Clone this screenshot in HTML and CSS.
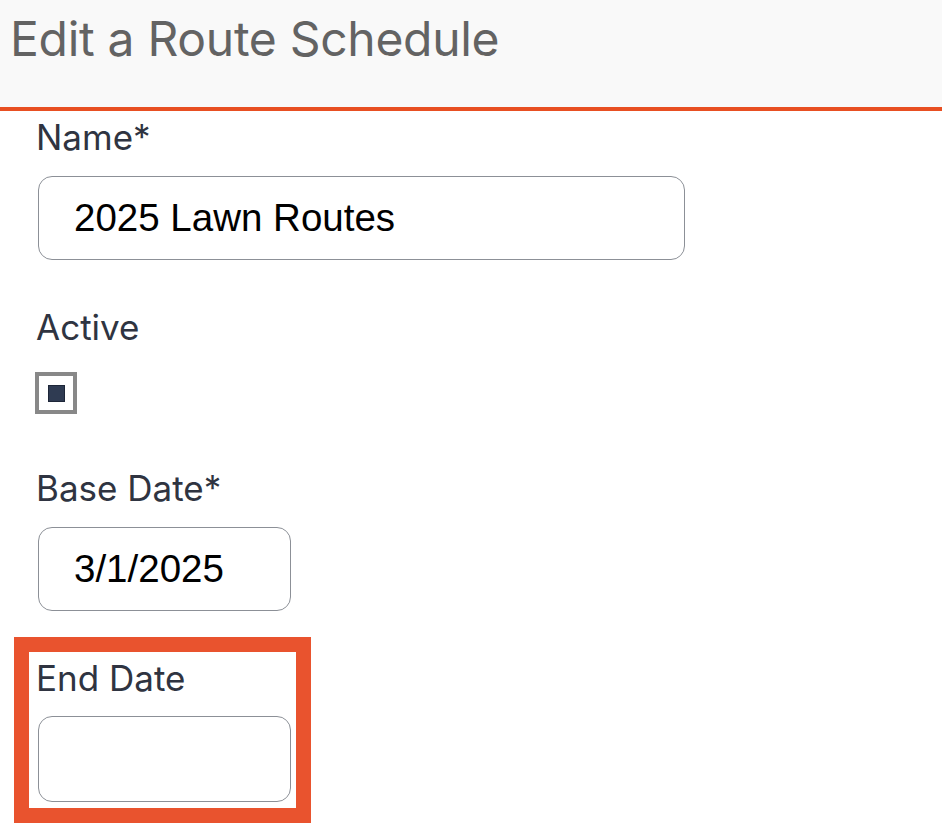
FILE: index.html
```html
<!DOCTYPE html>
<html lang="en">
<head>
<meta charset="utf-8">
<title>Edit a Route Schedule</title>
<link rel="stylesheet" href="styles.css">
</head>
<body>
<header class="page-header">
  <h1 class="page-title">Edit a Route Schedule</h1>
</header>
<main class="form">
  <div class="field">
    <label class="field-label" for="name">Name*</label>
    <input class="text-input name-input" id="name" type="text" value="2025 Lawn Routes">
  </div>
  <div class="field field-check">
    <span class="field-label">Active</span>
    <span class="checkbox" role="checkbox" aria-checked="true"><span class="checkbox-mark"></span></span>
  </div>
  <div class="field">
    <label class="field-label" for="base">Base Date*</label>
    <input class="text-input date-input" id="base" type="text" value="3/1/2025">
  </div>
  <div class="field field-highlight">
    <label class="field-label" for="end">End Date</label>
    <input class="text-input date-input" id="end" type="text" value="">
  </div>
</main>
</body>
</html>
```
FILE: styles.css
```css
* { box-sizing: border-box; }
html, body { margin: 0; padding: 0; background: #ffffff; }
body { width: 942px; height: 824px; overflow: hidden; font-family: Inter, "Liberation Sans", sans-serif; }

.page-header {
  height: 111px;
  background: #f9f9f9;
  border-bottom: 4px solid #e84f22;
  padding: 15px 0 0 10px;
}
.page-title {
  margin: 0;
  font-family: Inter, "Liberation Sans", sans-serif;
  font-weight: 400;
  font-size: 48px;
  line-height: 48px;
  color: #636363;
  letter-spacing: -0.3px;
}

.form {
  display: flex;
  flex-direction: column;
  align-items: flex-start;
  padding: 8px 0 0 14px;
}
.field {
  display: flex;
  flex-direction: column;
  align-items: flex-start;
  gap: 21px;
  padding-left: 24px;
}
.field + .field { margin-top: 49px; }

.field-label {
  font-family: Inter, "Liberation Sans", sans-serif;
  font-size: 35px;
  line-height: 36px;
  letter-spacing: 0;
  color: #2f3441;
  margin-left: -2px;
}

.text-input {
  height: 84px;
  border: 1.5px solid #8c9097;
  border-radius: 14px;
  padding: 0 0 0 35px;
  font-family: "Liberation Sans", Arial, sans-serif;
  font-size: 38.5px;
  color: #000;
  background: #fff;
  outline: none;
}
.name-input { width: 647px; }
.date-input { width: 253px; }

.field-check { gap: 27px; }
.checkbox {
  width: 42px;
  height: 42px;
  margin-left: -3px;
  margin-bottom: 7px;
  border: 4px solid #888888;
  background: #fff;
  display: flex;
  align-items: center;
  justify-content: center;
}
.checkbox-mark {
  width: 17px;
  height: 17px;
  background: #2f3b52;
  border: 1px solid #1d2638;
}

.field.field-highlight {
  margin-top: 26px;
  border: 15px solid #e9532e;
  padding: 8px 5px 6px 9px;
  gap: 20px;
}
.field-highlight .date-input { height: 86px; }
```
